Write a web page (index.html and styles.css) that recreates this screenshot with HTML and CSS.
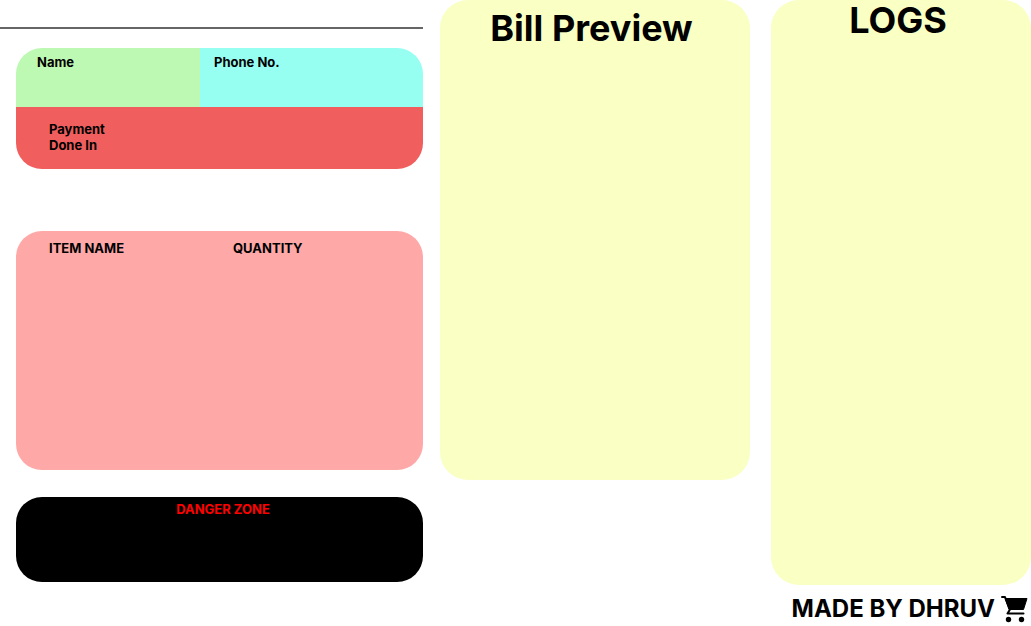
FILE: index.html
```
<!DOCTYPE html>
<html lang="en">
<head>
<meta charset="utf-8">
<title>Billing</title>
<meta name="viewport" content="width=device-width, initial-scale=1">
<link rel="stylesheet" href="styles.css">
</head>
<body>
<main class="layout">
  <div class="entry">
    <hr class="rule">
    <section class="customer">
      <div class="customer-name">Name</div>
      <div class="customer-phone">Phone No.</div>
      <div class="payment"><span class="payment-label">Payment Done In</span></div>
    </section>
    <section class="items">
      <div>ITEM NAME</div>
      <div>QUANTITY</div>
    </section>
    <section class="danger">DANGER ZONE</section>
  </div>
  <section class="preview"><h1 class="title">Bill Preview</h1></section>
  <div class="side">
    <section class="logs"><h1 class="title">LOGS</h1></section>
    <footer class="credit">
      <span>MADE BY DHRUV</span>
      <svg class="cart" viewBox="0 0 27 29" aria-hidden="true">
        <path d="M4 4.500H26L22.500 15.500H8z" stroke="#000" stroke-linejoin="round"/>
        <path d="M1 3H4L9 15.500L6.500 19.500H22.500" fill="none" stroke="#000" stroke-width="2" stroke-linecap="round" stroke-linejoin="round"/>
        <circle cx="7.500" cy="25.500" r="2.700"/>
        <circle cx="20.500" cy="25.500" r="2.700"/>
      </svg>
    </footer>
  </div>
</main>
</body>
</html>
```
FILE: styles.css
```
* { box-sizing: border-box; }

body {
  margin: 0;
  background: #fff;
  color: #000;
  font: 700 13px/16px Inter, sans-serif;
}

.layout {
  display: grid;
  grid-template-columns: 440fr 331fr 260fr;
  align-items: start;
}

.entry {
  padding: 27px 17px 0 0;
}

.rule {
  height: 2px;
  margin: 0 0 19px;
  border: 0;
  background: #666;
}

.customer,
.items,
.danger {
  margin-left: 16px;
  border-radius: 26px;
  overflow: hidden;
}

.customer {
  display: grid;
  grid-template-columns: 184fr 223fr;
}

.customer-name {
  min-height: 59px;
  padding: 6px 21px;
  background: #bef9b3;
}

.customer-phone {
  padding: 6px 14px;
  background: #96fff2;
}

.payment {
  grid-column: 1 / -1;
  min-height: 62px;
  padding: 14px 33px;
  background: #f05e5e;
}

.payment-label {
  display: block;
  width: 64px;
}

.items {
  display: grid;
  grid-template-columns: 184fr 190fr;
  min-height: 239px;
  margin-top: 62px;
  padding: 9px 0 0 33px;
  background: #ffa8a8;
}

.danger {
  min-height: 85px;
  margin-top: 27px;
  padding: 4px 0 0 7px;
  background: #000;
  color: #f00;
  text-align: center;
}

.preview,
.logs {
  border-radius: 28px;
  background: #faffc3;
  text-align: center;
}

.preview {
  min-height: 480px;
  margin-right: 21px;
  padding: 8px 7px 0 0;
}

.logs {
  min-height: 585px;
  padding-right: 6px;
}

.title {
  margin: 0;
  font-size: 36px;
  line-height: 40px;
}

.credit {
  display: flex;
  justify-content: flex-end;
  align-items: center;
  gap: 6px;
  padding: 9px 3px 0 0;
  font-size: 24px;
  line-height: 29px;
  white-space: nowrap;
}

.cart {
  width: 27px;
  height: 29px;
}
```
